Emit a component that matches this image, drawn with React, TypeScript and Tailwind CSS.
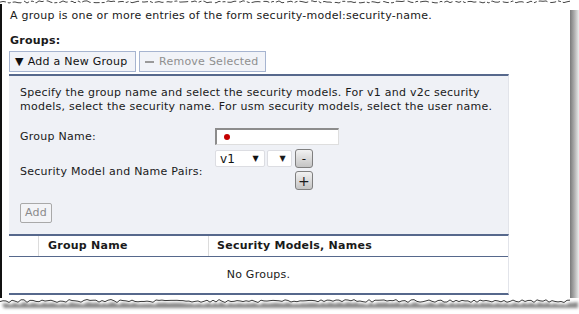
import React from "react";

function rng(seed: number) {
  let s = seed;
  return () => {
    s = (s * 1103515245 + 12345) % 2147483648;
    return s / 2147483648;
  };
}

function TopEdge() {
  const r = rng(7);
  const pts: string[] = [];
  for (let x = 0; x <= 570; x += 3) {
    pts.push(`${x},${(0.8 + r() * 2.2).toFixed(2)}`);
  }
  return (
    <svg width="579" height="4" className="block">
      <polyline points={pts.join(" ")} fill="none" stroke="#444" strokeWidth="1" strokeDasharray="6 2 3 2 9 3" />
    </svg>
  );
}

function BottomEdge() {
  const r = rng(13);
  const pts: [number, number][] = [];
  for (let x = 0; x <= 572; x += 3) {
    pts.push([x, 1.5 + r() * 3]);
  }
  const line = pts.map(([x, y]) => `${x},${y.toFixed(2)}`).join(" ");
  const shadow =
    pts.map(([x, y]) => `${x + 2},${(y + 2.5).toFixed(2)}`).join(" ") + " 578,4 578,10 4,10";
  return (
    <svg width="579" height="16" className="block">
      <defs>
        <filter id="b" x="-5%" y="-50%" width="110%" height="200%">
          <feGaussianBlur stdDeviation="1.4" />
        </filter>
      </defs>
      <polygon points={shadow} fill="#8a8a8a" filter="url(#b)" />
      <polygon points={line + " 572,0 0,0"} fill="#ffffff" />
      <polyline points={line} fill="none" stroke="#3a3a3a" strokeWidth="1" />
    </svg>
  );
}

export default function App() {
  const font = { fontFamily: '"DejaVu Sans", Verdana, sans-serif' };
  return (
    <div className="w-[579px] h-[314px] bg-white overflow-hidden text-[11px] leading-[14px] tracking-[0.25px] text-[#1a1a1a]" style={font}>
      <TopEdge />
      <div className="flex h-[294px]">
        <div className="w-[570px] border-l-2 border-[#111] pl-[7px] pt-[5px] flex flex-col">
          <div className="pl-[1px]">A group is one or more entries of the form security-model:security-name.</div>
          <div className="mt-[11px] font-bold pl-[1px]">Groups:</div>
          <div className="mt-[3px] flex gap-[3px]">
            <button className="h-[21px] w-[127px] border border-[#a6b4d0] bg-[#f1f3f8] flex items-center pl-[5px] text-[11px] text-[#111]">
              <span className="text-[11px] mr-[4px]">▼</span>Add a New Group
            </button>
            <button className="h-[21px] w-[127px] border border-[#a6b4d0] bg-[#f1f3f8] flex items-center pl-[5px] text-[11px] text-[#8f8f8f]">
              <span className="inline-block w-[9px] h-[2px] bg-[#9a9a9a] mr-[5px]"></span>Remove Selected
            </button>
          </div>
          <div className="mt-[2px] w-[500px] border-t-2 border-[#56688c] bg-[#eff1f6] border-r border-r-[#e2e4ea]">
            <div className="pl-[11px] pt-[10px]">
              <div>
                Specify the group name and select the security models. For v1 and v2c security
                <br />
                models, select the security name. For usm security models, select the user name.
              </div>
              <div className="mt-[14px] flex items-center h-[17px]">
                <div className="w-[195px]">Group Name:</div>
                <div className="w-[124px] h-[17px] bg-white border-t-2 border-l-2 border-[#8c8c8c] border-r border-b border-r-[#dedede] border-b-[#dedede] flex items-center pl-[7px]">
                  <span className="w-[6px] h-[6px] rounded-full bg-[#c40000]"></span>
                </div>
              </div>
              <div className="mt-[4px] flex items-center h-[42px]">
                <div className="w-[195px] pt-[3px]">Security Model and Name Pairs:</div>
                <div className="flex gap-[2px] self-start">
                  <div className="flex gap-[2px] pt-[1px]">
                    <div className="w-[50px] h-[17px] bg-white border border-[#dcdde2] rounded-[2px] flex items-center justify-between pl-[4px] pr-[5px] text-[12px] text-[#111]">
                      <span>v1</span>
                      <span className="text-[8px]">▼</span>
                    </div>
                    <div className="w-[25px] h-[17px] bg-white border border-[#dcdde2] rounded-[2px] flex items-center justify-end pr-[5px]">
                      <span className="text-[8px]">▼</span>
                    </div>
                  </div>
                  <div className="flex flex-col gap-[3px] ml-[1px]">
                    <button className="w-[18px] h-[19px] rounded-[3px] border border-[#7f7f7f] bg-gradient-to-b from-[#f2f2f2] to-[#c4c4c4] text-[12px] leading-[12px] flex items-center justify-center">-</button>
                    <button className="w-[18px] h-[19px] rounded-[3px] border border-[#7f7f7f] bg-gradient-to-b from-[#f2f2f2] to-[#c4c4c4] text-[14px] leading-[14px] flex items-center justify-center">+</button>
                  </div>
                </div>
              </div>
              <div className="mt-[12px] pb-[11px]">
                <button className="w-[32px] h-[20px] rounded-[2px] border border-[#a9a9a9] bg-[#f3f4f7] text-[#8a8a8a] text-[11px] flex items-center justify-center">Add</button>
              </div>
            </div>
          </div>
          <div className="w-[500px] border-t-2 border-[#56688c] border-b-2 border-b-[#56688c] border-r border-r-[#e2e4ea]">
            <div className="flex h-[21px] border-b border-[#56688c] font-bold">
              <div className="w-[30px] border-r border-[#dcdcdc]"></div>
              <div className="w-[170px] border-r border-[#dcdcdc] pl-[9px] flex items-center">Group Name</div>
              <div className="flex-1 pl-[8px] flex items-center">Security Models, Names</div>
            </div>
            <div className="h-[36px] flex items-center justify-center">No Groups.</div>
          </div>
        </div>
        <div className="w-[9px] mt-[6px] bg-gradient-to-r from-[#7a7a7a] via-[#b0b0b0] to-[#ededed]"></div>
      </div>
      <BottomEdge />
    </div>
  );
}
